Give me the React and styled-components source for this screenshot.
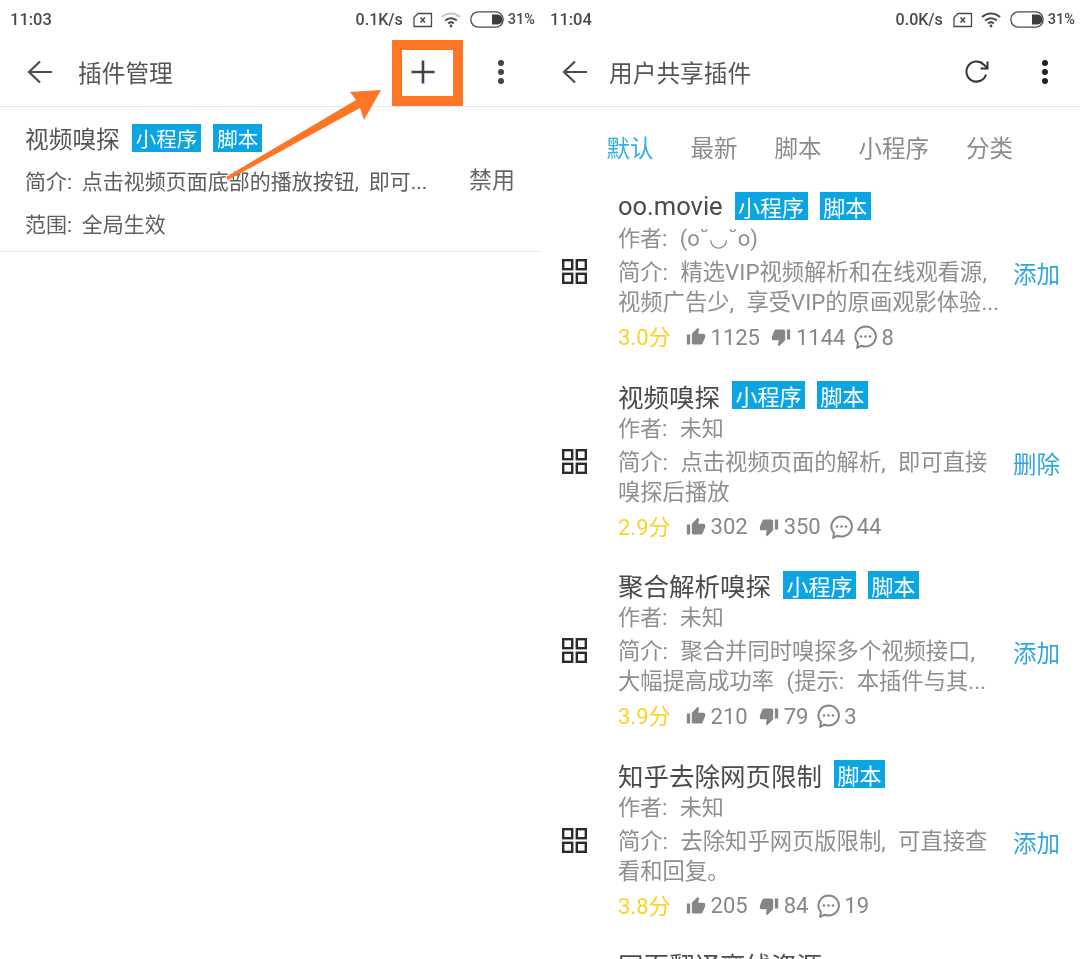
import React from 'react';
import styled, { createGlobalStyle } from 'styled-components';
import { MdThumbUp, MdThumbDown } from 'react-icons/md';

const GlobalStyle = createGlobalStyle`
  html, body { margin: 0; padding: 0; background: #fff; }
  body { font-family: Roboto, "Noto Sans CJK SC", sans-serif; }
`;

const Screen = styled.div`
  position: relative;
  display: flex;
  width: 1080px;
  height: 959px;
  overflow: hidden;
  background: #fff;
  filter: blur(0.35px);
`;

const Panel = styled.div`
  width: 540px;
  flex: none;
  display: flex;
  flex-direction: column;
`;

const StatusBar = styled.div`
  height: 37px;
  flex: none;
  padding: 1px 5px 0 10px;
  display: flex;
  align-items: center;
  font-size: 16px;
  font-weight: 500;
  color: #4a4a4a;
`;

const Clock = styled.span`
  flex: 1;
  font-size: 16.5px;
`;

const StatusGroup = styled.div`
  display: flex;
  align-items: center;
  gap: 8px;
`;

const Speed = styled.span`
  margin-right: 2px;
`;

const Percent = styled.span`
  margin-left: -5px;
  font-size: 14.5px;
`;

const Toolbar = styled.div`
  height: 68px;
  display: flex;
  align-items: center;
  padding: 0 ${p => p.$right}px 0 ${p => p.$left}px;
  gap: ${p => p.$gap}px;
  border-bottom: 1px solid #e8e8e8;
  flex: none;
`;

const PageTitle = styled.div`
  flex: 1;
  font-size: 23.7px;
  color: #555;
`;

const ToolButtons = styled.div`
  display: flex;
  gap: ${p => p.$gap}px;
`;

const ToolButton = styled.div`
  width: 48px;
  height: 48px;
  display: flex;
  align-items: center;
  justify-content: center;
`;

const InstalledItem = styled.div`
  display: flex;
  align-items: flex-start;
  padding: 15px 25px 10px;
  border-bottom: 1px solid #e8e8e8;
`;

const InstalledBody = styled.div`
  flex: 1;
  display: flex;
  flex-direction: column;
  gap: 11.5px;
`;

const TitleLine = styled.div`
  display: flex;
  align-items: center;
  height: 32px;
  font-size: 23.7px;
  color: #555;
  gap: 12px;
`;

const TagGroup = styled.span`
  display: flex;
  gap: 12px;
`;

const Tag = styled.span`
  display: inline-flex;
  align-items: center;
  justify-content: center;
  height: 28px;
  padding: 0 ${p => (p.$large ? 3.5 : 4)}px;
  background: #0ba5e3;
  color: #fff;
  font-size: ${p => (p.$large ? 22 : 20.5)}px;
`;

const InstalledLine = styled.div`
  height: 32px;
  line-height: 32px;
  font-size: 21px;
  color: #5e5e5e;
  word-spacing: 4.5px;
  white-space: nowrap;
`;

const DisableAction = styled.div`
  font-size: 23px;
  color: #666;
  margin-top: 39px;
`;

const Tabs = styled.div`
  display: flex;
  align-items: center;
  gap: 37px;
  height: 80px;
  padding: 0 0 2px 66.5px;
  flex: none;
`;

const TabItem = styled.span`
  font-size: 23.5px;
  color: ${p => (p.$active ? '#35aee2' : '#8c8c8c')};
`;

const PluginRow = styled.div`
  height: 189.5px;
  flex: none;
  display: flex;
  align-items: flex-start;
  padding-right: 20px;
`;

const GridCell = styled.div`
  width: 78px;
  padding: 70px 0 0 22px;
  box-sizing: border-box;
  flex: none;
`;

const PluginBody = styled.div`
  flex: 1;
  min-width: 0;
`;

const PluginTitle = styled(TitleLine)`
  height: 33px;
  font-size: 25.5px;
  color: #4a4a4a;
`;

const CutOffTitle = styled(PluginTitle)`
  margin-left: 78px;
`;

const Author = styled.div`
  height: 33px;
  line-height: 33px;
  margin-bottom: 2px;
  font-size: 22px;
  color: #8e8e8e;
  word-spacing: 7px;
`;

const Desc = styled.div`
  height: 30px;
  line-height: 30px;
  font-size: 22.3px;
  color: #8e8e8e;
  word-spacing: 7px;
  white-space: nowrap;
`;

const Stats = styled.div`
  display: flex;
  align-items: center;
  height: 36px;
  margin-top: 2px;
  font-size: 22px;
  color: #868686;
`;

const Score = styled.span`
  color: #fbd22a;
  margin: 0 15px 4px 0;
`;

const Stat = styled.span`
  display: inline-flex;
  align-items: center;
  gap: ${p => p.$gap}px;
  margin-right: ${p => p.$after}px;
`;

const RowAction = styled.div`
  width: 47px;
  flex: none;
  font-size: 23.5px;
  color: #2ea7e0;
  padding-top: 67px;
`;

const Callout = styled.div`
  position: absolute;
  left: 392px;
  top: 40px;
  width: 71px;
  height: 66px;
  box-sizing: border-box;
  border: 10px solid #fd7527;
  pointer-events: none;
`;

const ArrowLayer = styled.svg`
  position: absolute;
  left: 0;
  top: 0;
  pointer-events: none;
`;

const BackIcon = () => (
  <svg width="25" height="24" viewBox="0 0 25 24" fill="none" stroke="#4d4d4d" strokeWidth="2.2">
    <path d="M25 12H2M13 1.5 2 12l11 10.5" />
  </svg>
);

const PlusIcon = () => (
  <svg width="24" height="24" viewBox="0 0 24 24" stroke="#444" strokeWidth="2.6">
    <path d="M12 0.5v23M0.5 12h23" />
  </svg>
);

const DotsIcon = ({ color }) => (
  <svg width="8" height="26" viewBox="0 0 8 26" fill={color}>
    <circle cx="4" cy="4" r="3" />
    <circle cx="4" cy="13" r="3" />
    <circle cx="4" cy="22" r="3" />
  </svg>
);

const RefreshIcon = () => (
  <svg width="24" height="24" viewBox="0 0 24 24" fill="none" stroke="#333" strokeWidth="2">
    <path d="M21 14.5A10 10 0 1 1 18.6 4.6L22.4 8" />
    <path d="M22.5 1.5v7h-7" />
  </svg>
);

const GridIcon = () => (
  <svg width="25" height="25" viewBox="0 0 25 25" fill="none" stroke="#2b2b2b" strokeWidth="2.4">
    <rect x="1.2" y="1.2" width="9" height="9" />
    <rect x="14.8" y="1.2" width="9" height="9" />
    <rect x="1.2" y="14.8" width="9" height="9" />
    <rect x="14.8" y="14.8" width="9" height="9" />
  </svg>
);

const SimIcon = () => (
  <svg width="20" height="16" viewBox="0 0 20 16" fill="none" stroke="#4a4a4a" strokeWidth="1.3">
    <path d="M5 1.5h13.5v13H1V5.5z" />
    <path d="M7.5 5.5l4.5 5M12 5.5l-4.5 5" strokeWidth="1.5" />
  </svg>
);

const WifiIcon = ({ color }) => (
  <svg width="21" height="17" viewBox="0 0 21 17" fill="none" stroke={color} strokeWidth="2">
    <path d="M1 6a13 13 0 0 1 18 0" />
    <path d="M4.2 9.4a8.6 8.6 0 0 1 11.6 0" stroke="#4a4a4a" />
    <path d="M7.2 12.4a4.2 4.2 0 0 1 5.6 0" stroke="#4a4a4a" />
    <circle cx="10" cy="15" r="1.4" fill="#4a4a4a" stroke="none" />
  </svg>
);

const BatteryIcon = () => (
  <svg width="35" height="17" viewBox="0 0 35 17" fill="none">
    <rect x="0.8" y="0.8" width="32.4" height="15.4" rx="7.7" stroke="#4a4a4a" strokeWidth="1.3" />
    <path d="M22 3.5h5.5a5 5 0 0 1 0 10H22z" fill="#3c3c3c" />
  </svg>
);

const BubbleIcon = () => (
  <svg width="24" height="24" viewBox="0 0 24 24" fill="none" stroke="#868686" strokeWidth="2">
    <path d="M12.5 1.5a10.5 10 0 1 1-4.2 19.2L4.2 23l.8-5A10.5 10 0 0 1 12.5 1.5z" strokeLinejoin="round" />
    <circle cx="8" cy="11.5" r="1.3" fill="#868686" stroke="none" />
    <circle cx="12.5" cy="11.5" r="1.3" fill="#868686" stroke="none" />
    <circle cx="17" cy="11.5" r="1.3" fill="#868686" stroke="none" />
  </svg>
);

const Status = ({ time, speed, wifi }) => (
  <StatusBar>
    <Clock>{time}</Clock>
    <StatusGroup>
      <Speed>{speed}</Speed>
      <SimIcon />
      <WifiIcon color={wifi} />
      <BatteryIcon />
      <Percent>31%</Percent>
    </StatusGroup>
  </StatusBar>
);

const plugins = [
  { name: 'oo.movie', tags: ['小程序', '脚本'], author: '(o˘◡˘o)', desc: ['简介: 精选VIP视频解析和在线观看源,', '视频广告少, 享受VIP的原画观影体验...'], score: '3.0分', up: 1125, down: 1144, comments: 8, action: '添加' },
  { name: '视频嗅探', tags: ['小程序', '脚本'], author: '未知', desc: ['简介: 点击视频页面的解析, 即可直接', '嗅探后播放'], score: '2.9分', up: 302, down: 350, comments: 44, action: '删除' },
  { name: '聚合解析嗅探', tags: ['小程序', '脚本'], author: '未知', desc: ['简介: 聚合并同时嗅探多个视频接口,', '大幅提高成功率 (提示: 本插件与其...'], score: '3.9分', up: 210, down: 79, comments: 3, action: '添加' },
  { name: '知乎去除网页限制', tags: ['脚本'], author: '未知', desc: ['简介: 去除知乎网页版限制, 可直接查', '看和回复。'], score: '3.8分', up: 205, down: 84, comments: 19, action: '添加' },
];

const tabs = ['默认', '最新', '脚本', '小程序', '分类'];

const App = () => (
  <Screen>
    <GlobalStyle />
    <Panel>
      <Status time="11:03" speed="0.1K/s" wifi="#c4c4c4" />
      <Toolbar $left={27} $right={15} $gap={26}>
        <BackIcon />
        <PageTitle>插件管理</PageTitle>
        <ToolButtons $gap={30}>
          <ToolButton><PlusIcon /></ToolButton>
          <ToolButton><DotsIcon color="#444" /></ToolButton>
        </ToolButtons>
      </Toolbar>
      <InstalledItem>
        <InstalledBody>
          <TitleLine>
            视频嗅探
            <TagGroup>
              <Tag>小程序</Tag>
              <Tag>脚本</Tag>
            </TagGroup>
          </TitleLine>
          <InstalledLine>简介: 点击视频页面底部的播放按钮, 即可...</InstalledLine>
          <InstalledLine>范围: 全局生效</InstalledLine>
        </InstalledBody>
        <DisableAction>禁用</DisableAction>
      </InstalledItem>
    </Panel>

    <Panel>
      <Status time="11:04" speed="0.0K/s" wifi="#4a4a4a" />
      <Toolbar $left={22} $right={11} $gap={22}>
        <BackIcon />
        <PageTitle>用户共享插件</PageTitle>
        <ToolButtons $gap={20}>
          <ToolButton><RefreshIcon /></ToolButton>
          <ToolButton><DotsIcon color="#222" /></ToolButton>
        </ToolButtons>
      </Toolbar>
      <Tabs>
        {tabs.map((t, i) => <TabItem key={t} $active={i === 0}>{t}</TabItem>)}
      </Tabs>
      {plugins.map(p => (
        <PluginRow key={p.name}>
          <GridCell><GridIcon /></GridCell>
          <PluginBody>
            <PluginTitle>
              {p.name}
              <TagGroup>
                {p.tags.map(t => <Tag key={t} $large>{t}</Tag>)}
              </TagGroup>
            </PluginTitle>
            <Author>作者: {p.author}</Author>
            <Desc>{p.desc[0]}</Desc>
            <Desc>{p.desc[1]}</Desc>
            <Stats>
              <Score>{p.score}</Score>
              <Stat $gap={5} $after={11}><MdThumbUp size={20} />{p.up}</Stat>
              <Stat $gap={5} $after={8}><MdThumbDown size={20} />{p.down}</Stat>
              <Stat $gap={4}><BubbleIcon />{p.comments}</Stat>
            </Stats>
          </PluginBody>
          <RowAction>{p.action}</RowAction>
        </PluginRow>
      ))}
      <CutOffTitle>网页翻译离线资源</CutOffTitle>
    </Panel>

    <Callout />
    <ArrowLayer width="540" height="260" viewBox="0 0 540 260">
      <path d="M226 177 L356 100 L350 92 L381 90 L364 120 L360 108 L228 180 Z" fill="#fd7527" />
    </ArrowLayer>
  </Screen>
);

export default App;
